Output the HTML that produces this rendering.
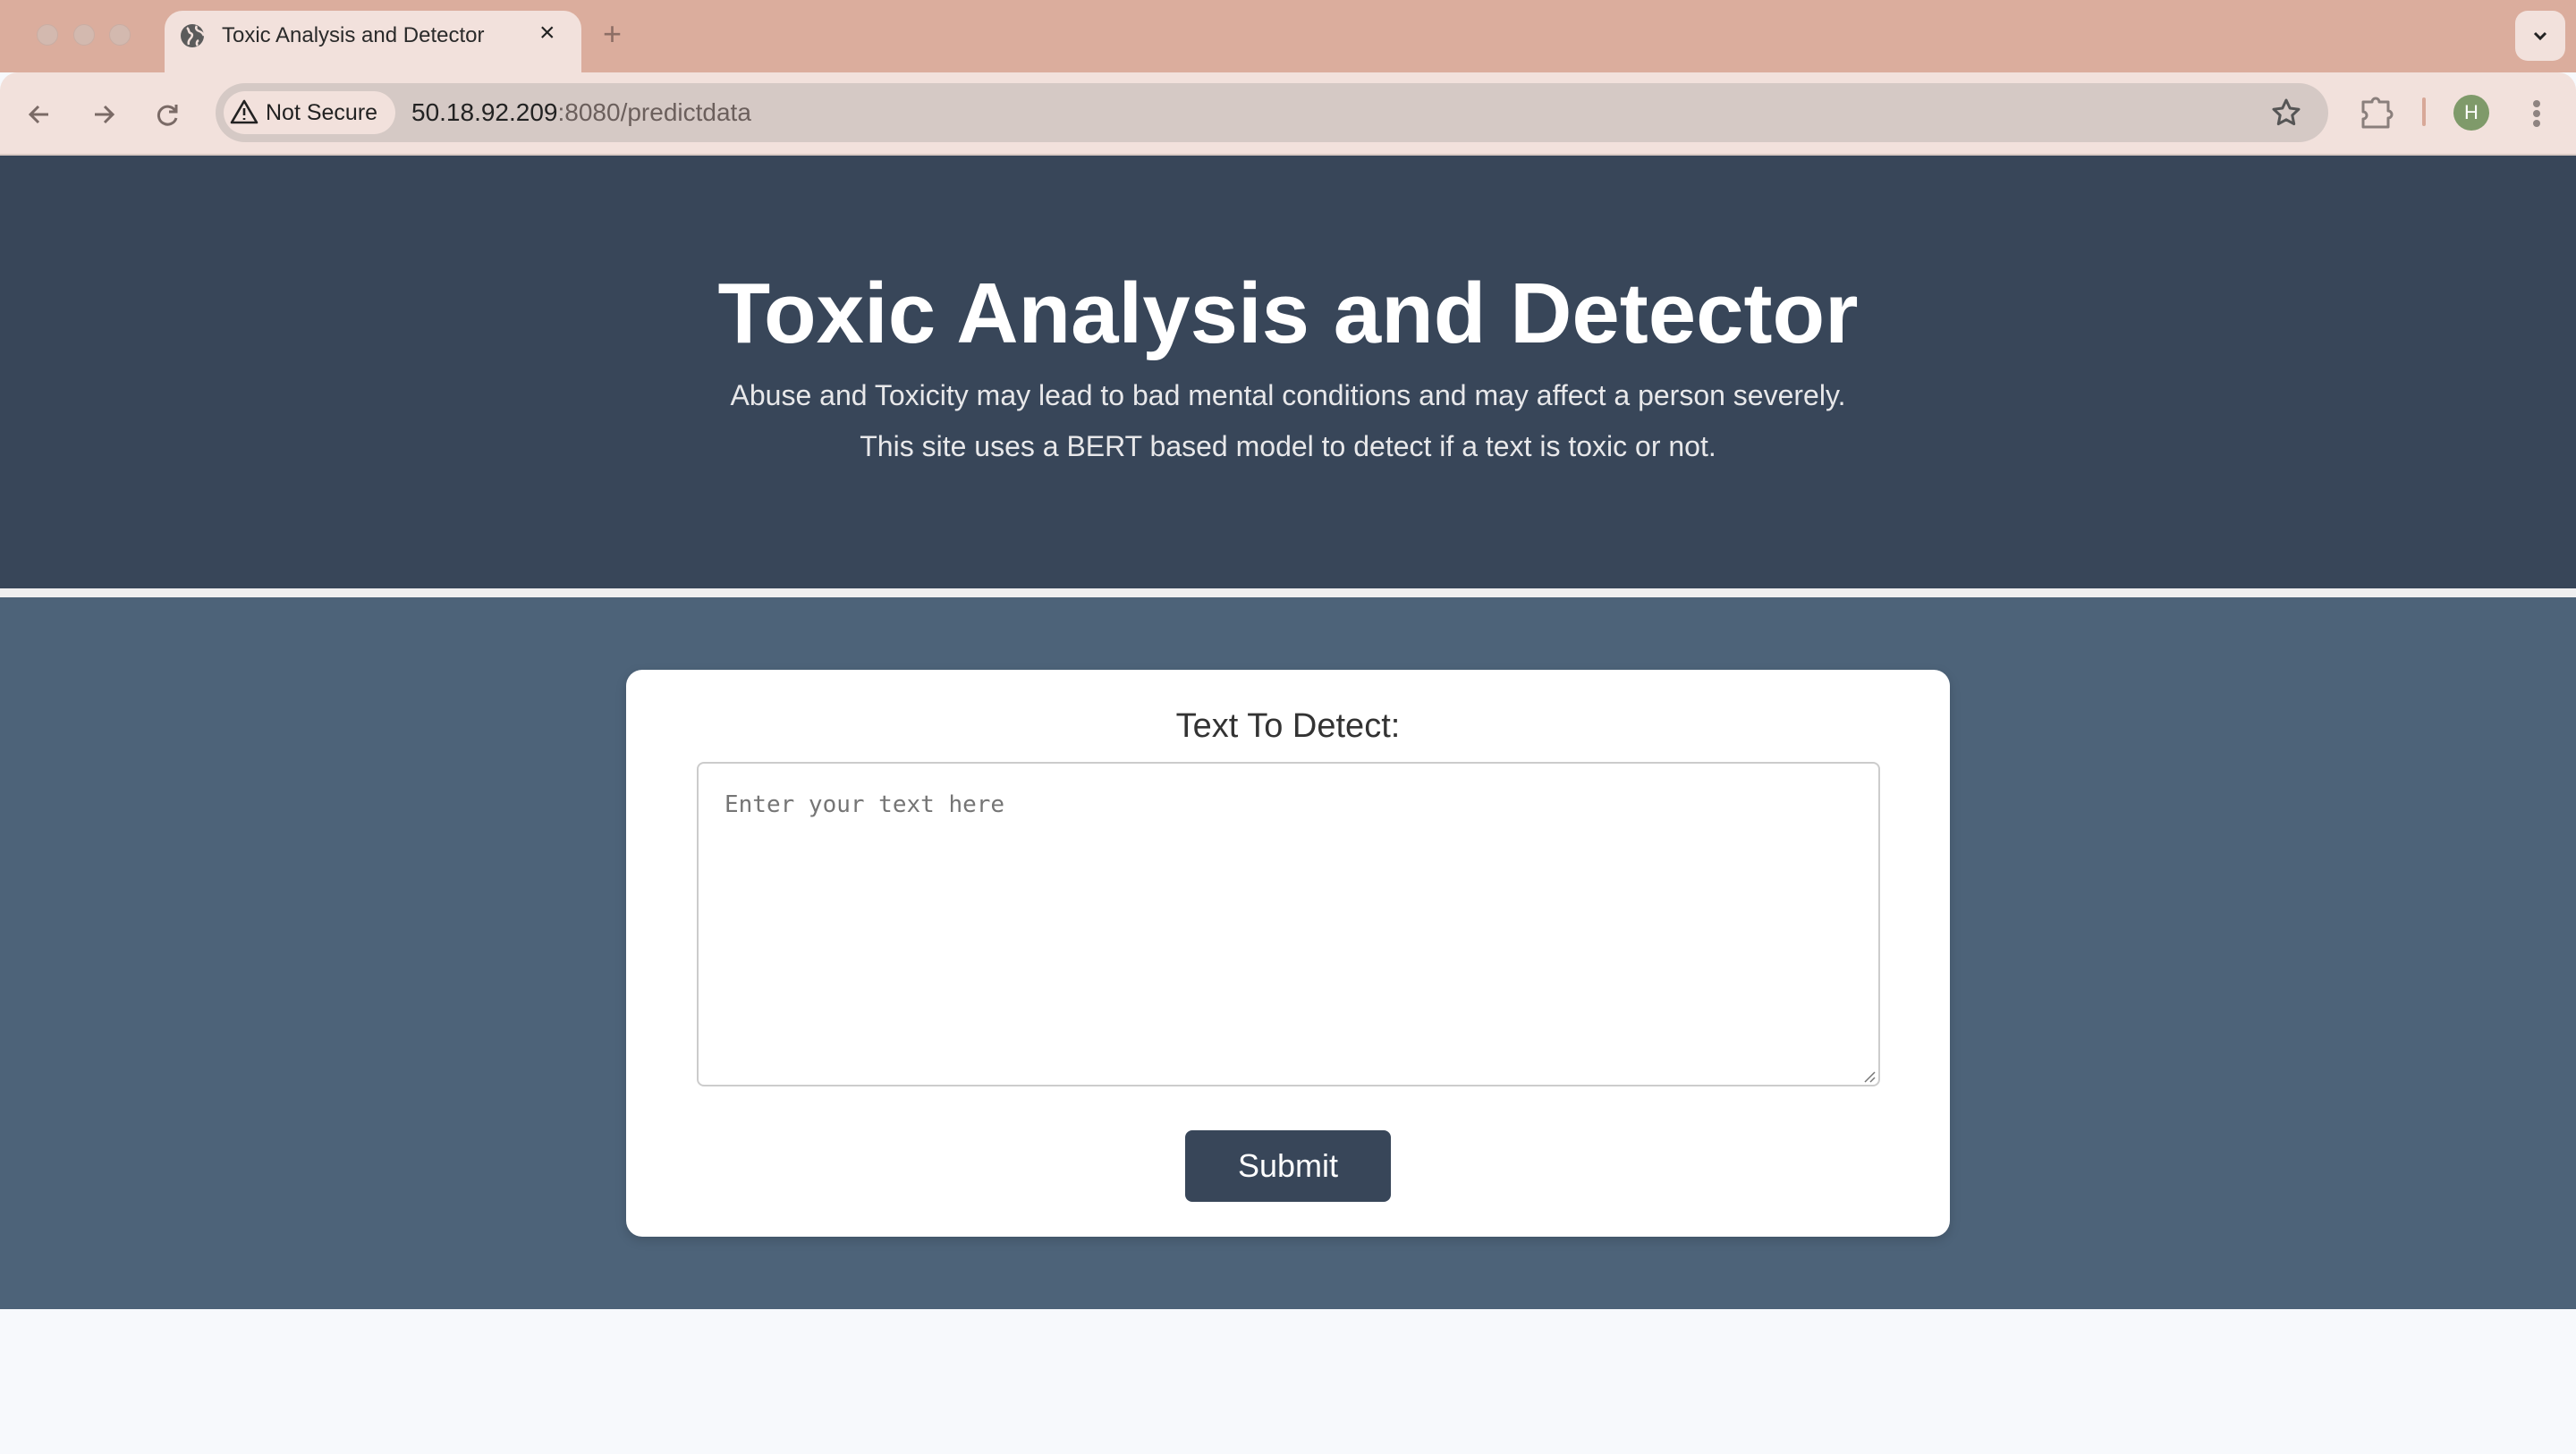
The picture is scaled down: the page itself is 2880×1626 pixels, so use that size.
<!DOCTYPE html>
<html><head><meta charset="utf-8"><style>
*{margin:0;padding:0;box-sizing:border-box}
body{width:2880px;height:1626px;overflow:hidden;font-family:"Liberation Sans",Arial,sans-serif;background:#f7f9fc;position:relative}
.abs{position:absolute}
</style></head><body>
<!-- tab bar -->
<div class="abs" style="left:0;top:0;width:2880px;height:81px;background:#dbad9d"></div>
<div class="abs" style="left:41px;top:27px;width:24px;height:24px;border-radius:50%;background:#d3b9af;border:1px solid #c9ada3"></div>
<div class="abs" style="left:82px;top:27px;width:24px;height:24px;border-radius:50%;background:#d3b9af;border:1px solid #c9ada3"></div>
<div class="abs" style="left:122px;top:27px;width:24px;height:24px;border-radius:50%;background:#d3b9af;border:1px solid #c9ada3"></div>
<div class="abs" style="left:184px;top:12px;width:466px;height:75px;background:#f2e1dc;border-radius:20px 20px 0 0"></div>
<svg class="abs" style="left:200px;top:25px" width="30" height="30" viewBox="0 0 30 30"><circle cx="15" cy="15" r="13" fill="#5b5b5b"/><path d="M9 6c3 2 1 5 4 6s2 4 0 6-3 4-2 7M20 4c-2 3 0 5 3 6s4 3 5 5M22 20c-2 1-3 4-1 6" stroke="#f2e1dc" stroke-width="2.5" fill="none"/></svg>
<div class="abs" style="left:248px;top:26px;font-size:24px;color:#2a2a2a">Toxic Analysis and Detector</div>
<div class="abs" style="left:603px;top:20px;font-size:30px;color:#222">×</div>
<div class="abs" style="left:674px;top:17px;font-size:36px;color:#8c6e65">+</div>
<div class="abs" style="left:2812px;top:12px;width:56px;height:56px;border-radius:14px;background:#f2e1dc"></div>
<svg class="abs" style="left:2830px;top:30px" width="20" height="20" viewBox="0 0 20 20"><path d="M4 7l6 6 6-6" stroke="#222" stroke-width="3" fill="none"/></svg>
<!-- toolbar -->
<div class="abs" style="left:0;top:81px;width:2880px;height:92px;background:#f2e1dc;border-radius:20px 20px 0 0"></div>
<div class="abs" style="left:0;top:172px;width:2880px;height:2px;background:#d8c9c4"></div>
<svg class="abs" style="left:26px;top:110px" width="36" height="36" viewBox="0 0 36 36"><path d="M28 18H8M17 9l-9 9 9 9" stroke="#7a6a66" stroke-width="3" fill="none"/></svg>
<svg class="abs" style="left:98px;top:110px" width="36" height="36" viewBox="0 0 36 36"><path d="M8 18h20M19 9l9 9-9 9" stroke="#7a6a66" stroke-width="3" fill="none"/></svg>
<svg class="abs" style="left:170px;top:110px" width="36" height="36" viewBox="0 0 36 36"><path d="M26 14a10 10 0 1 0 1 8" stroke="#7a6a66" stroke-width="3" fill="none"/><path d="M27 7v8h-8" stroke="#7a6a66" stroke-width="3" fill="none"/></svg>
<div class="abs" style="left:241px;top:93px;width:2362px;height:66px;border-radius:33px;background:#d5c9c5"></div>
<div class="abs" style="left:250px;top:102px;width:192px;height:48px;border-radius:24px;background:#f2e1dc"></div>
<svg class="abs" style="left:257px;top:110px" width="32" height="30" viewBox="0 0 32 30"><path d="M16 3L2 27h28z" stroke="#222" stroke-width="2.6" fill="none" stroke-linejoin="round"/><path d="M16 11v8M16 22v2" stroke="#222" stroke-width="2.6"/></svg>
<div class="abs" style="left:297px;top:112px;font-size:25px;color:#222">Not Secure</div>
<div class="abs" style="left:460px;top:110px;font-size:28px;color:#222">50.18.92.209<span style="color:#6b5f5c">:8080/predictdata</span></div>
<svg class="abs" style="left:2537px;top:107px" width="38" height="38" viewBox="0 0 38 38"><path d="M19 5l4.2 9 9.8 1.2-7.2 6.7 1.9 9.7L19 26.8l-8.7 4.8 1.9-9.7L5 15.2l9.8-1.2z" stroke="#555" stroke-width="3" fill="none" stroke-linejoin="round"/></svg>
<svg class="abs" style="left:2638px;top:106px" width="40" height="40" viewBox="0 0 40 40"><path d="M4 8h10a4 4 0 0 1 8 0h10v10a4 4 0 0 1 0 8v10H4V27a4 4 0 0 0 0-8z" stroke="#8a7f7c" stroke-width="3" fill="none" stroke-linejoin="round"/></svg>
<div class="abs" style="left:2708px;top:109px;width:4px;height:32px;border-radius:2px;background:#d8a898"></div>
<div class="abs" style="left:2743px;top:106px;width:40px;height:40px;border-radius:50%;background:#7f9a6a;color:#fff;font-size:22px;text-align:center;line-height:40px">H</div>
<div class="abs" style="left:2832px;top:112px;width:8px;height:8px;border-radius:50%;background:#8f8481"></div>
<div class="abs" style="left:2832px;top:123px;width:8px;height:8px;border-radius:50%;background:#8f8481"></div>
<div class="abs" style="left:2832px;top:134px;width:8px;height:8px;border-radius:50%;background:#8f8481"></div>
<!-- header -->
<div class="abs" style="left:0;top:174px;width:2880px;height:484px;background:#384659"></div>
<div class="abs" style="left:0;top:296px;width:2880px;text-align:center;font-size:96px;font-weight:bold;color:#fff;line-height:110px">Toxic Analysis and Detector</div>
<div class="abs" style="left:0;top:414px;width:2880px;text-align:center;font-size:32px;color:#e8e8ea;line-height:57px">Abuse and Toxicity may lead to bad mental conditions and may affect a person severely.<br>This site uses a BERT based model to detect if a text is toxic or not.</div>
<div class="abs" style="left:0;top:658px;width:2880px;height:10px;background:#efeff0"></div>
<div class="abs" style="left:0;top:668px;width:2880px;height:796px;background:#4d6379"></div>
<!-- card -->
<div class="abs" style="left:700px;top:749px;width:1480px;height:634px;background:#fff;border-radius:18px;box-shadow:0 4px 12px rgba(0,0,0,.15)"></div>
<div class="abs" style="left:700px;top:791px;width:1480px;text-align:center;font-size:38px;color:#333">Text To Detect:</div>
<div class="abs" style="left:779px;top:852px;width:1323px;height:363px;border:2px solid #ccc;border-radius:8px;background:#fff"></div>
<div class="abs" style="left:810px;top:885px;font-family:'DejaVu Sans Mono','Liberation Mono',monospace;font-size:26px;color:#757575">Enter your text here</div>
<svg class="abs" style="left:2083px;top:1197px" width="14" height="14" viewBox="0 0 14 14"><path d="M13 2L2 13M13 8L8 13" stroke="#777" stroke-width="1.5"/></svg>
<div class="abs" style="left:1325px;top:1264px;width:230px;height:80px;border-radius:8px;background:#384659;color:#fff;font-size:36px;text-align:center;line-height:80px">Submit</div>
</body></html>
